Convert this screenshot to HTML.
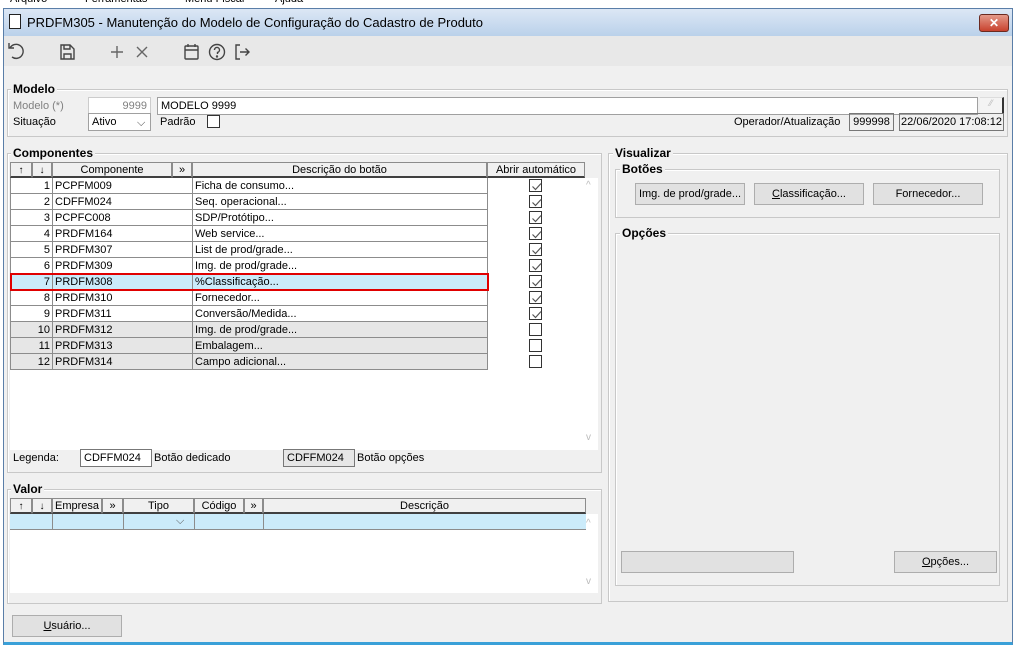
<!DOCTYPE html>
<html><head><meta charset="utf-8">
<style>
*{margin:0;padding:0;box-sizing:border-box}
body{width:1017px;height:646px;background:#fff;position:relative;overflow:hidden;font-family:"Liberation Sans",sans-serif;font-size:11px;color:#000}
.a{position:absolute}
.win{left:3px;top:8px;width:1010px;height:637px;background:#f0f0f0;border:1px solid #5a7ea8;border-bottom:3px solid #3aa0d8}
.grp{position:absolute;border:1px solid #c8c8c8;box-shadow:inset 1px 1px 0 #fff}
.gt{position:absolute;font-weight:bold;font-size:12px;background:#f0f0f0;padding:0 2px;line-height:13px}
.inp{position:absolute;background:#fff;border:1px solid #a0a0a0;height:18px;line-height:17px;padding:0 3px}
.btn{position:absolute;background:#e1e1e1;border:1px solid #adadad;text-align:center;line-height:21px;height:22px}
.hd{position:absolute;background:#f0f0f0;border:1px solid #8c8c8c;border-bottom:2px solid #404040;text-align:center;height:16px;line-height:15px}
.ar{font-weight:bold;font-size:10px}
.cell{position:absolute;border-right:1px solid #8c8c8c;border-bottom:1px solid #8c8c8c;height:16px;line-height:17px;padding:0 2px;white-space:nowrap;overflow:hidden}
.cb{position:absolute;width:13px;height:13px;border:1px solid #333;background:#fff}
.cb svg{position:absolute;left:1px;top:1px}
</style></head><body>
<div class="a" style="left:10px;top:-7px;font-size:11px">Arquivo</div>
<div class="a" style="left:85px;top:-7px">Ferramentas</div>
<div class="a" style="left:185px;top:-7px">Menu Fiscal</div>
<div class="a" style="left:275px;top:-7px">Ajuda</div>
<div class="a win"></div>
<div class="a" style="left:4px;top:9px;width:1008px;height:27px;background:linear-gradient(#dce7f5,#bad1ea)"></div>
<div class="a" style="left:9px;top:14px;width:12px;height:15px;border:1px solid #222;background:#fff"></div>
<div class="a" style="left:27px;top:15px;font-size:13px;line-height:16px">PRDFM305 - Manutenção do Modelo de Configuração do Cadastro de Produto</div>
<div class="a" style="left:979px;top:14px;width:30px;height:18px;background:linear-gradient(#e49a8a,#c8422e);border:1px solid #6b2a20;border-radius:3px;color:#fff;font-weight:bold;text-align:center;line-height:16px;font-size:12px">✕</div>
<div class="a" style="left:4px;top:36px;width:1008px;height:30px;background:#e8e8e8"></div>
<svg class="a" style="left:0;top:36px" width="260" height="30" fill="none" stroke="#444" stroke-width="1.4">
<path d="M10 12 A7 7 0 1 1 12 21"/><path d="M9 7 V12 H14"/>
<path d="M61 9 H70 L74 13 V23 H61 Z"/><path d="M64 9 V13 H70 V9"/><path d="M64 23 V18 H71 V23"/>
<path d="M117 10 V22 M111 16 H123" stroke="#666"/>
<path d="M137 11 L147 21 M147 11 L137 21" stroke="#666"/>
<rect x="185" y="10" width="13" height="13" rx="1"/><path d="M185 14 H198 M188 8 V11 M195 8 V11"/>
<circle cx="217" cy="16" r="7.5"/><path d="M214.5 14 a2.5 2.5 0 1 1 3 2.4 V18"/><circle cx="217" cy="20.5" r=".5"/>
<path d="M240 9 H236 V23 H240 M240 16 H249 M245.5 12.5 L249 16 L245.5 19.5"/>
</svg>

<div class="grp" style="left:7px;top:89px;width:1001px;height:48px"></div>
<div class="gt" style="left:11px;top:83px">Modelo</div>
<div class="a" style="left:13px;top:100px;color:#808080">Modelo (*)</div>
<div class="inp" style="left:88px;top:97px;width:63px;text-align:right;color:#808080;border-color:#ccc">9999</div>
<div class="inp" style="left:157px;top:97px;width:821px">MODELO 9999</div>
<div class="a" style="left:980px;top:97px;width:24px;height:17px;background:#f4f4f4;border-right:2px solid #333;border-top:1px solid #ddd;color:#bbb;text-align:center;font-size:9px">⁄⁄</div>
<div class="a" style="left:13px;top:116px">Situação</div>
<div class="inp" style="left:88px;top:113px;width:63px;height:18px">Ativo<span class="a" style="left:48px;top:1px;color:#444">⌵</span></div>
<div class="a" style="left:160px;top:116px">Padrão</div>
<div class="cb" style="left:207px;top:115px"></div>
<div class="a" style="left:734px;top:116px">Operador/Atualização</div>
<div class="a" style="left:849px;top:113px;width:45px;height:18px;border:1px solid #777;text-align:center;line-height:17px">999998</div>
<div class="a" style="left:899px;top:113px;width:105px;height:18px;border:1px solid #777;text-align:center;line-height:17px">22/06/2020 17:08:12</div>

<div class="grp" style="left:7px;top:153px;width:595px;height:320px"></div>
<div class="gt" style="left:11px;top:147px">Componentes</div>
<div class="a" style="left:10px;top:178px;width:588px;height:272px;background:#fff"></div>
<div class="a" style="left:586px;top:180px;color:#bbb;font-size:10px">^</div>
<div class="a" style="left:586px;top:432px;color:#bbb;font-size:10px">v</div>
<div class="hd ar" style="left:10px;top:162px;width:22px">↑</div>
<div class="hd ar" style="left:32px;top:162px;width:20px">↓</div>
<div class="hd" style="left:52px;top:162px;width:120px">Componente</div>
<div class="hd" style="left:172px;top:162px;width:20px">»</div>
<div class="hd" style="left:192px;top:162px;width:295px">Descrição do botão</div>
<div class="hd" style="left:487px;top:162px;width:98px">Abrir automático</div>
<div id="rows"></div>

<div class="a" style="left:13px;top:452px">Legenda:</div>
<div class="inp" style="left:80px;top:449px;width:72px;border-color:#777">CDFFM024</div>
<div class="a" style="left:154px;top:452px">Botão dedicado</div>
<div class="inp" style="left:283px;top:449px;width:72px;background:#e6e6e6;border-color:#777">CDFFM024</div>
<div class="a" style="left:357px;top:452px">Botão opções</div>

<div class="grp" style="left:7px;top:489px;width:595px;height:115px"></div>
<div class="gt" style="left:11px;top:483px">Valor</div>
<div class="a" style="left:10px;top:514px;width:588px;height:79px;background:#fff"></div>
<div class="hd ar" style="left:10px;top:498px;width:22px">↑</div>
<div class="hd ar" style="left:32px;top:498px;width:20px">↓</div>
<div class="hd" style="left:52px;top:498px;width:50px">Empresa</div>
<div class="hd" style="left:102px;top:498px;width:21px">»</div>
<div class="hd" style="left:123px;top:498px;width:71px">Tipo</div>
<div class="hd" style="left:194px;top:498px;width:50px">Código</div>
<div class="hd" style="left:244px;top:498px;width:19px">»</div>
<div class="hd" style="left:263px;top:498px;width:323px">Descrição</div>
<div class="a" style="left:10px;top:514px;width:576px;height:16px;background:#cbebfa;border-bottom:1px solid #8c8c8c"></div>
<div class="a" style="left:52px;top:514px;width:1px;height:16px;background:#8c8c8c"></div>
<div class="a" style="left:123px;top:514px;width:1px;height:16px;background:#8c8c8c"></div>
<div class="a" style="left:194px;top:514px;width:1px;height:16px;background:#8c8c8c"></div>
<div class="a" style="left:263px;top:514px;width:1px;height:16px;background:#8c8c8c"></div>
<div class="a" style="left:176px;top:515px;color:#555">⌵</div>
<div class="a" style="left:586px;top:518px;color:#bbb;font-size:10px">^</div>
<div class="a" style="left:586px;top:576px;color:#bbb;font-size:10px">v</div>
<div class="btn" style="left:12px;top:615px;width:110px"><u>U</u>suário...</div>

<div class="grp" style="left:608px;top:153px;width:400px;height:449px"></div>
<div class="gt" style="left:613px;top:147px">Visualizar</div>
<div class="grp" style="left:615px;top:169px;width:385px;height:49px"></div>
<div class="gt" style="left:620px;top:163px">Botões</div>
<div class="btn" style="left:635px;top:183px;width:110px">Img. de prod/grade...</div>
<div class="btn" style="left:754px;top:183px;width:110px"><u>C</u>lassificação...</div>
<div class="btn" style="left:873px;top:183px;width:110px">Fornecedor...</div>
<div class="grp" style="left:615px;top:233px;width:385px;height:353px"></div>
<div class="gt" style="left:620px;top:227px">Opções</div>
<div class="btn" style="left:621px;top:551px;width:173px"></div>
<div class="btn" style="left:894px;top:551px;width:103px"><u>O</u>pções...</div>

<script>
var d=[["PCPFM009","Ficha de consumo...",1],["CDFFM024","Seq. operacional...",1],["PCPFC008","SDP/Protótipo...",1],["PRDFM164","Web service...",1],["PRDFM307","List de prod/grade...",1],["PRDFM309","Img. de prod/grade...",1],["PRDFM308","%Classificação...",1],["PRDFM310","Fornecedor...",1],["PRDFM311","Conversão/Medida...",1],["PRDFM312","Img. de prod/grade...",0],["PRDFM313","Embalagem...",0],["PRDFM314","Campo adicional...",0]];
var h="";
d.forEach(function(r,i){var y=178+i*16;var bg=i==6?"#cbebfa":(i>=9?"#e6e6e6":"#fff");
h+='<div class="cell" style="left:10px;top:'+y+'px;width:43px;text-align:right;border-left:1px solid #8c8c8c;background:'+bg+'">'+(i+1)+'</div>';
h+='<div class="cell" style="left:53px;top:'+y+'px;width:140px;background:'+bg+'">'+r[0]+'</div>';
h+='<div class="cell" style="left:193px;top:'+y+'px;width:295px;background:'+bg+'">'+r[1]+'</div>';
h+='<div class="cb" style="left:529px;top:'+(y+1)+'px">'+(r[2]?'<svg width="11" height="11"><path d="M1.5 5.5 L4.5 8.5 L10 2.5" fill="none" stroke="#555" stroke-width="1.2"/></svg>':'')+'</div>';});
h+='<div class="a" style="left:10px;top:273px;width:479px;height:18px;border:2px solid #e00000"></div>';
document.getElementById("rows").innerHTML=h;
</script>
</body></html>
